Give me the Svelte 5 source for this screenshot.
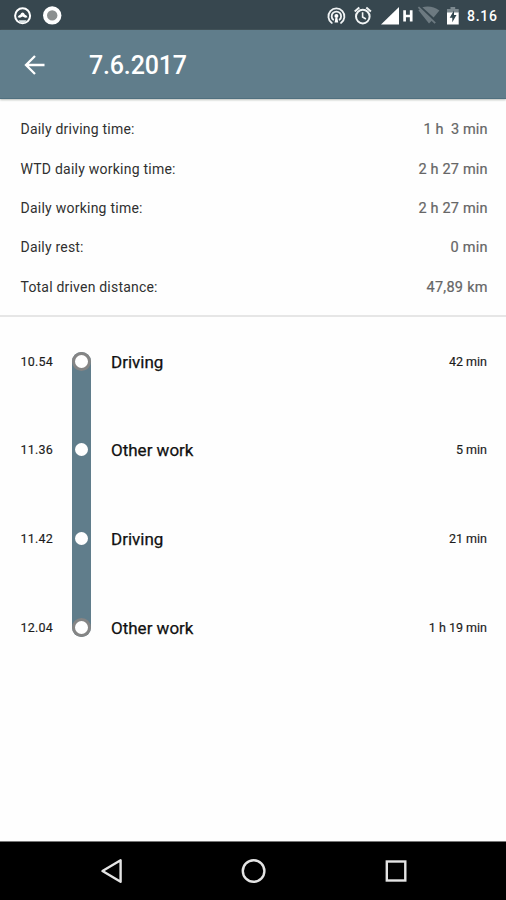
<script>
  const summary = [
    ['Daily driving time:', '1 h  3 min', 114, 64],
    ['WTD daily working time:', '2 h 27 min', 155, 69],
    ['Daily working time:', '2 h 27 min', 122, 69],
    ['Daily rest:', '0 min', 63, 37],
    ['Total driven distance:', '47,89 km', 137, 61]
  ];
  const events = [
    ['10.54', 'Driving', '42 min'],
    ['11.36', 'Other work', '5 min'],
    ['11.42', 'Driving', '21 min'],
    ['12.04', 'Other work', '1 h 19 min']
  ];
</script>

<div class="screen">
  <div class="status">
    <svg class="left" width="70" height="30" viewBox="0 0 70 30">
      <circle cx="22.6" cy="15.8" r="7.5" fill="none" stroke="#fff" stroke-width="2" />
      <path d="M17.6 17.2Q18.6 15.2 20.2 14.8Q21.2 12.4 22.6 12.4T25 14.8Q26.6 15.2 27.6 17.2L25.2 17.8L22.6 16.6L20 17.8Z" fill="#fff" />
      <path d="M18.6 20.2h8l-1.6 2.6h-4.8z" fill="#dce4e6" />
      <circle cx="52.2" cy="15.4" r="9.2" fill="#fff" />
      <circle cx="52.2" cy="15.4" r="5.2" fill="#8b8f8f" />
    </svg>
    <svg class="icons" width="144" height="30" viewBox="320 0 144 30">
      <g fill="none" stroke="#f1f4f5" stroke-width="1.8" stroke-linecap="round">
        <path d="M331.8 22.9A8 8 0 1 1 341 22.9" />
        <path d="M333.2 19.7A4.7 4.7 0 1 1 339.6 19.7" />
      </g>
      <circle cx="336.4" cy="16" r="2" fill="#fff" />
      <path d="M335.4 18h2l.8 4.4h-3.6z" fill="#fff" />
      <g fill="none" stroke="#f1f4f5" stroke-width="2">
        <circle cx="362.8" cy="16.6" r="6.8" />
        <path d="M354.7 11.4l4.6-3.9M366.3 7.5l4.6 3.9" />
        <path d="M362.6 12.3v4.7l3.3 2" stroke-width="1.6" />
      </g>
      <path d="M381 24.5L399 7v17.5z" fill="#fff" />
      <path d="M404.6 10.3v11.2M411.2 10.3v11.2M404.6 16h6.6" fill="none" stroke="#fff" stroke-width="2.7" />
      <path d="M422.3 7.2Q431.5 4.8 439.4 10.4L433.6 17.6Z" fill="#6d7a81" />
      <path d="M418.4 10.2L420.2 9.2L432 20.6L429 23.6Z" fill="#6d7a81" />
      <path d="M418.4 7.2L435.2 23.2" fill="none" stroke="#6d7a81" stroke-width="1.8" />
      <path d="M447 9h3.5V7h4.7v2h3.5v4H447z" fill="#7c898f" />
      <path d="M447 12.5h11.7v12H447z" fill="#fff" />
      <path d="M454 10.5l-4.3 7.2h2.6v4.6l4.2-7.2h-2.5z" fill="#31464f" />
    </svg>
    <span class="clock"><svg width="32" height="18"><text x="0" y="14" textLength="30" lengthAdjust="spacing">8.16</text></svg></span>
  </div>

  <header>
    <svg width="22" height="22" viewBox="0 0 22 22">
      <path d="M20.5 11H2.5M11 2L2 11L11 20" fill="none" stroke="#fff" stroke-width="2.3" />
    </svg>
    <h1><svg width="110" height="36"><text x="0" y="27" textLength="98">7.6.2017</text></svg></h1>
  </header>

  <section class="summary">
    {#each summary as [label, value, lw, vw]}
      <div class="row">
        <svg width="170" height="20"><text x="0.5" y="15" textLength={lw}>{label}</text></svg>
        <svg class="value" width="90" height="20"><text x={89.5 - vw} y="15" textLength={vw} xml:space="preserve">{value}</text></svg>
      </div>
    {/each}
  </section>

  <section class="timeline">
    {#each events as [time, name, duration], i}
      <div class="event">
        <span class="time">{time}</span>
        <span class="track" class:first={i === 0} class:last={i === events.length - 1}>
          <i class="dot"></i>
        </span>
        <span class="name">{name}</span>
        <span class="duration">{duration}</span>
      </div>
    {/each}
  </section>

  <nav>
    <svg width="506" height="58" viewBox="0 842 506 58" fill="none" stroke="#e4e4e4" stroke-width="2.4">
      <path d="M102.5 871L120.6 860.3V881.7Z" stroke-linejoin="round" />
      <circle cx="253.6" cy="871" r="10.8" />
      <rect x="386.8" y="861.5" width="18.5" height="19" />
    </svg>
  </nav>
</div>

<style>
  .screen {
    width: 506px;
    height: 900px;
    display: flex;
    flex-direction: column;
    overflow: hidden;
    background: #fefefe;
    color: #2c2c2c;
    font-family: Roboto, sans-serif;
  }
  svg { display: block; flex: none; }
  .status {
    display: flex;
    justify-content: space-between;
    height: 30px;
    flex: none;
    background: #37474f;
  }
  .icons { margin-left: auto; }
  .clock {
    width: 39px;
    padding: 7px 0 0 3px;
    font-size: 14px;
    font-weight: 500;
  }
  .clock text, h1 text { fill: #fff; }
  header {
    display: flex;
    align-items: center;
    box-sizing: border-box;
    height: 69px;
    flex: none;
    padding: 2px 0 0 24px;
    background: #607d8b;
    border-bottom: 1px solid #50707f;
    box-shadow: 0 1px 2px #b9bdb9;
  }
  h1 {
    margin: 0 0 0 43px;
    font-size: 25px;
    font-weight: 500;
  }
  .summary {
    box-sizing: border-box;
    height: 218px;
    flex: none;
    padding: 10.5px 18px 0 20px;
    border-bottom: 2px solid #e6e6e6;
    font-size: 14px;
  }
  .row {
    height: 39.4px;
    display: flex;
    align-items: center;
    justify-content: space-between;
  }
  .row text { fill: #303030; }
  .row .value text {
    fill: #666;
    stroke: #666;
    stroke-width: .2px;
    font-size: 14.5px;
  }
  .timeline { flex: 1; }
  .event {
    height: 88.6px;
    display: flex;
    align-items: center;
    padding: 0 19px 0 20.5px;
    color: #1c1c1c;
    font-size: 12.5px;
    -webkit-text-stroke: .15px currentColor;
  }
  .time { width: 51.5px; letter-spacing: .2px; }
  .track {
    width: 19px;
    height: 100%;
    display: flex;
    align-items: center;
    justify-content: center;
    background: #607d8b;
  }
  .track.first {
    height: 54px;
    align-self: flex-end;
    align-items: flex-start;
    border-radius: 10px 10px 0 0;
  }
  .track.last {
    height: 54px;
    align-self: flex-start;
    align-items: flex-end;
    border-radius: 0 0 10px 10px;
  }
  .dot {
    width: 13px;
    height: 13px;
    border-radius: 50%;
    background: #fff;
  }
  .first .dot, .last .dot {
    box-sizing: border-box;
    width: 19px;
    height: 19px;
    border: 3px solid #858585;
  }
  .name {
    margin-left: 20px;
    padding-top: 1px;
    color: #111;
    font-size: 17px;
    -webkit-text-stroke: .25px currentColor;
  }
  .duration { margin-left: auto; }
  nav {
    height: 58px;
    flex: none;
    background: #000;
    border-top: 1px solid #777;
  }
</style>
